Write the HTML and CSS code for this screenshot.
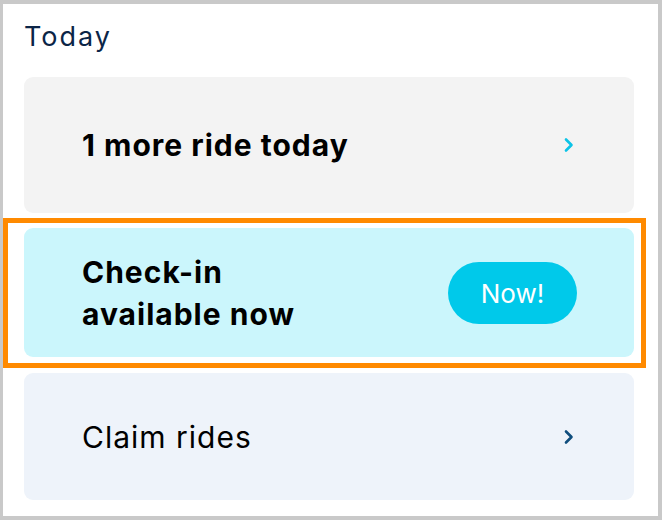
FILE: index.html
```html
<!DOCTYPE html>
<html lang="en">
<head>
<meta charset="utf-8">
<title>Today</title>
<link rel="stylesheet" href="styles.css">
</head>
<body>
  <main class="panel">
    <h2 class="panel-title">Today</h2>
    <ul class="card-list">
      <li class="card card--neutral">
        <span class="card-label card-label--bold">1 more ride today</span>
        <svg class="chevron chevron--cyan" width="12" height="16" viewBox="0 0 12 16" aria-hidden="true">
          <path d="M3 2.5 L8.5 8 L3 13.5" fill="none" stroke="currentColor" stroke-width="2.6" stroke-linecap="round" stroke-linejoin="round"/>
        </svg>
      </li>
      <li class="card card--highlight">
        <span class="card-label card-label--bold card-label--wrap">Check-in<br>available now</span>
        <span class="pill">Now!</span>
      </li>
      <li class="card card--soft">
        <span class="card-label">Claim rides</span>
        <svg class="chevron chevron--navy" width="12" height="16" viewBox="0 0 12 16" aria-hidden="true">
          <path d="M3 2.5 L8.5 8 L3 13.5" fill="none" stroke="currentColor" stroke-width="2.6" stroke-linecap="round" stroke-linejoin="round"/>
        </svg>
      </li>
    </ul>
  </main>
</body>
</html>
```

FILE: styles.css
```css
* {
  box-sizing: border-box;
}

html,
body {
  margin: 0;
  height: 100%;
}

body {
  background: #c9c9c9;
  padding: 4px 4px 4px 3px;
  font-family: "Inter", "Roboto", sans-serif;
  color: #000;
}

.panel {
  background: #fff;
  height: 100%;
  padding: 17px 24px 0 21px;
}

.panel-title {
  margin: 0 0 24px 0;
  font-size: 27px;
  line-height: 32px;
  letter-spacing: 2px;
  font-weight: 400;
  color: #0b2547;
}

.card-list {
  list-style: none;
  margin: 0;
  padding: 0;
  display: flex;
  flex-direction: column;
  gap: 15px;
}

.card {
  position: relative;
  display: flex;
  align-items: center;
  justify-content: space-between;
  border-radius: 9px;
  padding: 0 57px 0 58px;
  min-height: 127px;
}

.card--neutral {
  background: #f3f3f3;
  min-height: 136px;
}

.card--highlight {
  background: #cbf6fc;
  padding-top: 23px;
  padding-bottom: 22px;
  min-height: 129px;
}

.card--highlight::after {
  content: "";
  position: absolute;
  top: -10px;
  left: -21px;
  right: -12px;
  bottom: -11px;
  border: 5px solid #ff8a00;
  pointer-events: none;
}

.card--soft {
  background: #eef3fa;
  margin-top: 1px;
}

.card-label {
  font-size: 30px;
  line-height: 42px;
  letter-spacing: 1px;
  font-weight: 400;
  color: #000;
}

.card-label--bold {
  font-weight: 700;
}

.chevron {
  display: block;
  margin-right: 2px;
}

.chevron--cyan {
  color: #0bc3e7;
}

.chevron--navy {
  color: #0f4d7d;
}

.pill {
  display: inline-flex;
  align-items: center;
  justify-content: center;
  width: 129px;
  height: 62px;
  border-radius: 31px;
  background: #00c9ea;
  color: #fff;
  font-size: 26px;
  font-weight: 400;
}
```
